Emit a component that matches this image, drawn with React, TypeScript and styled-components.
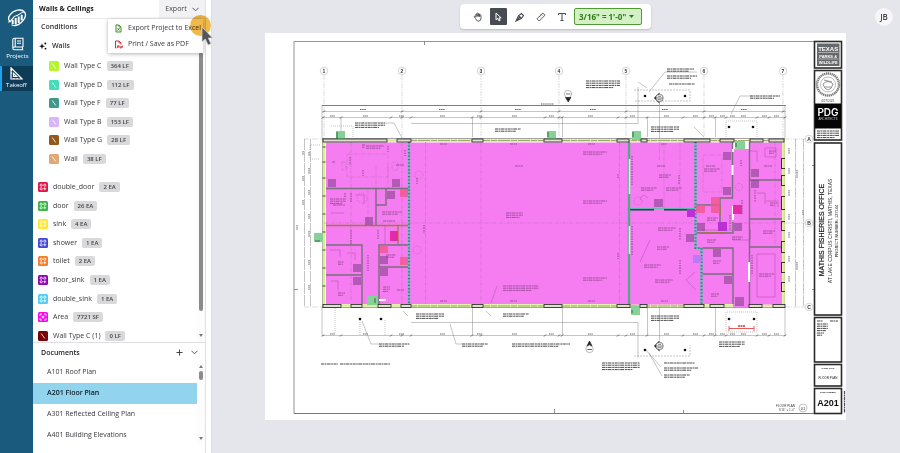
import React from "react";
import styled, { createGlobalStyle } from "styled-components";

const GlobalStyle = createGlobalStyle`
  * { box-sizing: border-box; }
  body { margin: 0; background: #e5e6eb; font-family: "Open Sans", "Noto Sans", sans-serif; }
  button, select { font: inherit; color: inherit; border: 0; margin: 0; padding: 0; background: none; cursor: pointer; }
  ul { list-style: none; margin: 0; padding: 0; }
  h1, h2, h3 { margin: 0; font-size: 7px; font-weight: 700; line-height: 10px; }
`;

const Shell = styled.div`
  display: flex;
  min-height: 100vh;
  font-size: 7px;
  line-height: 10px;
  color: #38383d;
`;

/* ---------- navigation rail ---------- */
const Rail = styled.nav`
  flex: none;
  width: 33px;
  background: #1a5a7d;
  color: #fff;
  display: flex;
  flex-direction: column;
`;
const LogoLink = styled.a`
  display: flex;
  justify-content: center;
  padding: 9px 0 8px;
`;
const RailLink = styled.a<{ $active?: boolean }>`
  display: flex;
  flex-direction: column;
  align-items: center;
  justify-content: flex-end;
  height: ${(p) => (p.$active ? 25 : 31)}px;
  padding: ${(p) => (p.$active ? "0 2px 1px 0" : "0 0 5px 2px")};
  border-left: ${(p) => (p.$active ? "2px solid #1ba4ee" : "0")};
  background: ${(p) => (p.$active ? "#0d3b58" : "transparent")};
  color: #fff;
  font-size: 6px;
  line-height: 10px;
  text-decoration: none;
`;

/* ---------- side panel ---------- */
const Side = styled.aside`
  flex: none;
  width: 179px;
  background: #fff;
  border-right: 1px solid #dcdde2;
  display: flex;
`;
const SideBody = styled.div`
  position: relative;
  width: 173px;
  border-right: 1px solid #e2e2e6;
  display: flex;
  flex-direction: column;
`;
const PanelHeader = styled.header`
  display: flex;
  justify-content: space-between;
  align-items: center;
  height: 19px;
  padding-left: 6px;
  border-bottom: 1px solid #ebebee;
  color: #16161a;
`;
const ExportButton = styled.button`
  display: flex;
  align-items: center;
  justify-content: center;
  gap: 5px;
  width: 46px;
  height: 18px;
  background: #f2f2f4;
  color: #44444a;
`;
const Menu = styled.div`
  position: absolute;
  top: 19px;
  right: 2px;
  width: 95px;
  padding: 1px 0;
  background: #fff;
  box-shadow: 0 1px 4px rgba(0, 0, 0, 0.3);
`;
const MenuItem = styled.button`
  display: flex;
  align-items: center;
  gap: 5px;
  width: 100%;
  height: 16px;
  padding-left: 6px;
  white-space: nowrap;
`;
const ClickHalo = styled.span`
  position: absolute;
  top: 15px;
  left: 157px;
  width: 21px;
  height: 21px;
  border-radius: 50%;
  background: #f0b94a;
  mix-blend-mode: multiply;
  pointer-events: none;
`;
const Pointer = styled.svg`
  position: absolute;
  top: 15px;
  left: 157px;
  pointer-events: none;
`;
const Scroller = styled.div<{ $height?: number }>`
  display: flex;
  height: ${(p) => (p.$height ? `${p.$height}px` : "auto")};
  overflow: hidden;
`;
const ScrollContent = styled.div`
  flex: 1;
`;
const ScrollTrack = styled.div<{ $top: number }>`
  flex: none;
  width: 8px;
  padding-top: ${(p) => p.$top}px;
  display: flex;
  flex-direction: column;
  align-items: center;
  background: #fcfcfc;
`;
const Thumb = styled.span<{ $size: number }>`
  flex: none;
  width: 4px;
  height: ${(p) => p.$size}px;
  border-radius: 2px;
  background: #8b8b8b;
`;
const Arrow = styled.span<{ $up?: boolean }>`
  margin: ${(p) => (p.$up ? "0 0 3px" : "auto 0 5px")};
  border: 2px solid transparent;
  border-${(p) => (p.$up ? "top" : "bottom")}: 0;
  border-${(p) => (p.$up ? "bottom" : "top")}: 3px solid #77777a;
`;
const SectionTitle = styled.h2`
  padding: 3px 0 0 8px;
  color: #333338;
  font-weight: 600;
`;
const GroupTitle = styled.h3`
  display: flex;
  align-items: center;
  gap: 5px;
  padding: 9px 0 6px 6px;
  color: #333338;
  font-weight: 600;
`;
const List = styled.ul<{ $height: number; $indent: number }>`
  display: grid;
  grid-auto-rows: 1fr;
  height: ${(p) => p.$height}px;
  margin-bottom: 10px;
  padding-left: ${(p) => p.$indent}px;
`;
const Row = styled.li`
  display: flex;
  align-items: center;
  gap: 5px;
  white-space: nowrap;
`;
const Badge = styled.span`
  padding: 0 4px;
  border-radius: 2px;
  background: #d9d9db;
  color: #444448;
  font-size: 6px;
  line-height: 10px;
  font-weight: 600;
`;
const DocsHeader = styled.div`
  display: flex;
  align-items: center;
  gap: 8px;
  height: 20px;
  padding: 0 7px 0 8px;
  border-top: 1px solid #dedee2;
  h2 { flex: 1; color: #222227; font-weight: 600; }
`;
const DocList = styled.ul`
  display: grid;
  grid-auto-rows: 1fr;
  height: 83px;
`;
const IconButton = styled.button`
  display: flex;
`;
const DocButton = styled.button<{ $active?: boolean }>`
  width: 100%;
  height: 100%;
  padding-left: 14px;
  text-align: left;
  color: ${(p) => (p.$active ? "#0d1a22" : "#38383d")};
  font-weight: ${(p) => (p.$active ? 600 : 400)};
  background: ${(p) => (p.$active ? "#92d3ee" : "transparent")};
`;

/* ---------- work area ---------- */
const Main = styled.main`
  flex: 1;
  min-width: 0;
  background: #e5e6eb;
`;
const TopBar = styled.div`
  display: grid;
  grid-template-columns: 1fr auto 1fr;
  align-items: center;
  height: 33px;
  padding: 0 7px 0 6px;
`;
const Toolbar = styled.div`
  grid-column: 2;
  display: flex;
  align-items: center;
  gap: 4px;
  height: 25px;
  padding: 0 9px;
  border-radius: 4px;
  background: #fff;
  box-shadow: 0 1px 2px rgba(0, 0, 0, 0.18);
`;
const Tool = styled.button<{ $active?: boolean }>`
  display: flex;
  align-items: center;
  justify-content: center;
  width: 17px;
  height: 17px;
  border-radius: 1px;
  background: ${(p) => (p.$active ? "#484b52" : "transparent")};
  color: ${(p) => (p.$active ? "#fff" : "#4a4a50")};
`;
const ScaleBox = styled.label`
  display: flex;
  align-items: center;
  width: 68px;
  height: 17px;
  padding: 0 7px 0 4px;
  border: 1px solid #4f9a31;
  border-radius: 2px;
  background: #d5f0c6;
  color: #2b7d12;
`;
const ScaleSelect = styled.select`
  flex: 1;
  min-width: 0;
  appearance: none;
  outline: 0;
  font-size: 8px;
  line-height: 12px;
  font-weight: 700;
`;
const Avatar = styled.button`
  justify-self: end;
  width: 18px;
  height: 18px;
  border-radius: 50%;
  background: #f6f6f7;
  color: #44444a;
  font-size: 8px;
  font-weight: 600;
`;
const SheetArea = styled.div`
  padding: 0 54px 33px 53px;
`;
const Sheet = styled.svg`
  display: block;
  width: 100%;
  height: auto;
  background: #fff;
`;

/* ---------- icons ---------- */
const Logo = () => (
  <svg width="20" height="18" viewBox="0 0 20 18" fill="none" stroke="#fff" strokeLinecap="round">
    <path d="M3 12.500C-1 8.500 4.500 2.500 10.500 1.200C17.500 0 20 4.500 17.500 9.500C15 14.500 9 18 5 16" strokeWidth="1.300" />
    <path d="M1.500 13C5 13 6 7 8.500 7C11 7 13.500 3.500 16.500 3" strokeWidth="1.200" />
    <path d="M5.700 11V15M8.700 9V15.500M11.700 7.500V14M14.700 5.700V11.500" strokeWidth="2" strokeLinecap="butt" />
  </svg>
);
const BookIcon = () => (
  <svg width="12" height="14" viewBox="0 0 12 14" fill="none" stroke="#fff" strokeWidth="1.100">
    <path d="M11 10V1.200H2.300Q.8 1.200 .8 2.800V11.200Q.8 12.800 2.500 12.800H11.300M11 10H2.500Q.8 10 .8 11.400M10.500 10V12.800M3.200 1.200V10M5 4H9M5 6.200H9" />
  </svg>
);
const SquareIcon = () => (
  <svg width="13" height="13" viewBox="0 0 13 13" fill="none" stroke="#fff" strokeWidth="1.200">
    <path d="M1 .8V12H12.200ZM3.500 6.500V9.500H6.700Z M1 3.500H2.200M1 6H2.200M4 12V10.900M7 12V10.900" />
  </svg>
);
const Chevron = () => (
  <svg width="7" height="5" viewBox="0 0 7 5" fill="none" stroke="#55555a" strokeWidth="1">
    <path d="M.5 .8L3.500 3.800L6.500 .8" />
  </svg>
);
const PlusIcon = () => (
  <svg width="7" height="7" viewBox="0 0 7 7" stroke="#44444a" strokeWidth="1">
    <path d="M3.500 .5V6.500M.5 3.500H6.500" />
  </svg>
);
const SparkIcon = () => (
  <svg width="8" height="8" viewBox="0 0 8 8" fill="#111">
    <path d="M3 1.300L3.800 3.500L6 4.300L3.800 5.100L3 7.300L2.200 5.100L0 4.300L2.200 3.500Z" />
    <circle cx="6.300" cy="1.500" r="1" />
    <circle cx="6.500" cy="6.700" r=".9" />
  </svg>
);
const FileIcon = ({ color, pdf }: { color: string; pdf?: boolean }) => (
  <svg width="9" height="9" viewBox="0 0 9 9" fill="none" stroke={color} strokeWidth="1">
    <path d={pdf ? "M1.500 8V1H5L7 3V4.500M1.500 8H2.500" : "M2 1H5L7 3V8H2Z"} />
    <path d={pdf ? "M3.500 7.800V5.800H5V7H3.500M6 8V5.800M6 8H7.200V6M8.200 8V6H9" : "M3.400 4L5.600 6.700M5.600 4L3.400 6.700"} strokeWidth=".9" />
    <path d="M5 1V3H7" strokeWidth=".8" />
  </svg>
);
const Swatch = ({ color, kind }: { color: string; kind: string }) => (
  <svg width="10" height="10" viewBox="0 0 10 10" fill="none" stroke="#fff">
    <rect width="10" height="10" rx="1.500" fill={color} stroke="none" />
    {kind === "line" && <path d="M3.200 2.500L6.800 7.500" strokeWidth=".8" />}
    {kind === "count" && (
      <g strokeWidth=".8">
        <circle cx="3.200" cy="3.200" r="1.100" />
        <circle cx="6.800" cy="3.200" r="1.100" />
        <circle cx="3.200" cy="6.800" r="1.100" />
        <path d="M5.300 6.800H8.200M6.800 5.300V8.200" />
      </g>
    )}
    {kind === "area" && <path d="M2 3.800V2H4M6 2H8V3.800M8 6.200V8H6M4 8H2V6.200M3.500 5H6.500M5 3.600V6.400" strokeWidth=".9" />}
  </svg>
);
const HandIcon = () => (
  <svg width="10" height="10" viewBox="0 0 10 10" fill="none" stroke="currentColor" strokeWidth=".9" strokeLinejoin="round">
    <path d="M2.600 6.400L1.300 5.200Q.7 4.300 1.700 4.300L2.800 5.200V2.400Q3.400 1.500 4 2.400V4.500V1.600Q4.700 .7 5.300 1.600V4.500V2Q6 1.100 6.600 2V4.700V3.100Q7.300 2.300 8 3.200V6.300Q7.800 9.200 5.300 9.200Q3.600 9.200 2.600 6.400Z" />
  </svg>
);
const ArrowIcon = () => (
  <svg width="9" height="10" viewBox="0 0 9 10" fill="none" stroke="currentColor" strokeWidth="1">
    <path d="M2 1V7.800L3.700 6.300L4.900 8.900L6.100 8.300L5 5.900H7.200Z" />
  </svg>
);
const PenIcon = () => (
  <svg width="10" height="10" viewBox="0 0 10 10" fill="none" stroke="currentColor" strokeWidth="1.100">
    <path d="M1 9L3.500 3.800L6.500 1.500L8.500 3.500L6.200 6.500ZM1 9L5 5M6.200 1.200L8.800 3.800" />
    <path d="M3.700 4L6 6.200" strokeWidth="1.600" />
  </svg>
);
const RulerIcon = () => (
  <svg width="10" height="10" viewBox="0 0 10 10" fill="none" stroke="currentColor" strokeWidth=".9">
    <path d="M6.800 1L9 3.200L3.200 9L1 6.800ZM5.200 2.600L6.200 3.600M3.500 4.300L4.500 5.300" />
  </svg>
);
const TextIcon = () => (
  <svg width="10" height="10" viewBox="0 0 10 10" fill="none" stroke="currentColor" strokeWidth="1">
    <path d="M1.500 3V1.500H8.500V3M5 1.500V8.500M3.500 8.500H6.500" />
  </svg>
);
const Caret = () => (
  <svg width="5" height="3" viewBox="0 0 5 3" fill="#2b7d12">
    <path d="M0 0H5L2.500 3Z" />
  </svg>
);

/* ---------- floor plan ---------- */
const Fill = ({ items, color, opacity = 1 }: { items: number[][]; color: string; opacity?: number }) => (
  <g fill={color} opacity={opacity}>
    {items.map(([x, y, w = 8, h = 8], i) => (
      <rect key={i} x={x} y={y} width={w} height={h} />
    ))}
  </g>
);

/* Small annotation blocks: x, y, width, number of lines */
const notes = [
  [355, 123, 30, 3], [586, 81, 34, 4], [667, 69, 27, 2], [667, 76, 30, 2], [669, 84, 26, 1],
  [750, 96, 30, 2], [651, 127, 28, 3], [495, 129, 26, 2], [416, 314, 28, 3], [379, 344, 31, 2],
  [462, 344, 26, 2], [503, 314, 26, 2], [512, 344, 58, 2], [602, 363, 38, 4], [664, 363, 31, 1],
  [664, 368, 34, 2], [664, 375, 26, 2], [651, 316, 28, 3], [719, 342, 26, 3], [321, 364, 17, 1],
  [340, 364, 50, 1],
];
const titleNotes = [[817, 131, 22, 4], [817, 321, 6, 1], [830, 321, 8, 1], [817, 324, 11, 4], [817, 333, 7, 2]];
const roomNotes = [
  [366, 146, 18, 2], [330, 199, 16, 3], [382, 212, 20, 2], [338, 262, 6, 2], [338, 293, 7, 2],
  [386, 255, 10, 2], [383, 287, 7, 3], [396, 165, 8, 1], [332, 162, 3, 1], [383, 221, 12, 1],
  [506, 213, 17, 3], [583, 152, 24, 2], [583, 201, 24, 2], [583, 278, 24, 2], [503, 286, 36, 3],
  [515, 166, 8, 1], [659, 175, 12, 2], [641, 188, 16, 2], [666, 188, 16, 2], [657, 166, 8, 1],
  [658, 228, 18, 2], [657, 247, 12, 2], [644, 265, 17, 2], [655, 280, 18, 2], [704, 169, 16, 2],
  [706, 166, 9, 1], [769, 151, 7, 2], [764, 166, 8, 1], [770, 203, 7, 2], [763, 231, 12, 2],
  [759, 274, 15, 2], [707, 218, 11, 2], [707, 240, 9, 2], [713, 261, 8, 2], [711, 294, 8, 2],
  [732, 237, 11, 2], [510, 144, 7, 1], [588, 144, 7, 1], [661, 144, 6, 1], [440, 144, 7, 1], [362, 145, 3, 2],
  [510, 301, 7, 1], [588, 301, 7, 1], [661, 301, 7, 1], [440, 301, 7, 1], [333, 205, 12, 1], [397, 290, 7, 1],
];
const Notes = ({ items, color }: { items: number[][]; color: string }) => (
  <g stroke={color} strokeWidth="1" strokeDasharray="3 .5 1.500 .5 4 .7 2 .5">
    {items.flatMap(([x, y, w, n], i) =>
      Array.from({ length: n }, (_, k) => (
        <path key={`${i}-${k}`} d={`M${x} ${y + k * 2.2}h${k === n - 1 && n > 1 ? w * 0.8 : w}`} />
      ))
    )}
  </g>
);

const Bubble = ({ x, y, label }: { x: number; y: number; label: string }) => (
  <g>
    <circle cx={x} cy={y} r="3.800" fill="#fff" stroke="#aaa" strokeWidth=".5" />
    <text x={x} y={y + 1.7} textAnchor="middle" fontSize="5" fontWeight="700" fill="#333">{label}</text>
  </g>
);
const Marker = ({ x, y }: { x: number; y: number }) => (
  <g>
    <path d={`M${x - 5.5} ${y}L${x} ${y - 5.5}V${y + 5.5}Z`} fill="#111" />
    <circle cx={x} cy={y} r="3.700" fill="#fff" stroke="#333" strokeWidth=".6" />
    <path d={`M${x - 3.5} ${y}h7M${x - 1.5} ${y - 1.7}h3M${x - 2} ${y + 1.7}h4`} stroke="#444" strokeWidth=".7" />
  </g>
);

const columns = [324, 402, 481, 559, 626, 704, 783];
const dims = [323, 341, 391, 402, 411, 472, 481, 545, 559, 562, 618, 626, 647, 683, 704, 715, 726, 757, 769, 785];
const topBlocks = [[323, 64], [397, 14], [472, 11], [544, 18], [617, 12], [641, 6], [684, 26], [720, 14], [750, 13], [769, 15]];
const bottomBlocks = [[323, 18], [351, 11], [378, 13], [401, 10], [472, 11], [544, 18], [617, 13], [640, 7], [684, 20], [710, 14], [749, 13], [773, 12]];

const FloorPlan = () => (
  <Sheet viewBox="265 33 581 387" role="img" aria-label="A201 Floor Plan" fontFamily="'Liberation Sans', Arial, sans-serif">
    <g fill="none" stroke="#777" strokeWidth=".8">
      <path d="M842 41.500H294V413.500H842" />
      <path d="M294 413.500H813" stroke="#777" strokeWidth="1.200" />
      <path d="M424.500 41V45M554.500 409V413M683.500 410V413M812 165.500H815M812 289.500H815M294 289.500H298" />
    </g>

    <g fill="none" stroke="#bbb" strokeWidth=".5" strokeDasharray="5 1 1 1">
      {columns.map((x) => <path key={x} d={`M${x} 75V138`} />)}
      <path d="M304 139H322M785 139H805M304 307H322M785 307H805M785 223H805" />
    </g>
    <g fill="none" stroke="#8a8a8a" strokeWidth=".5">
      <path d="M322 105.500H786" stroke="#444" strokeWidth=".7" />
      <path d="M322 111.500H786M322 117.500H786M322 335.500H786" />
      <path d="M411 123.500H638V87M411 322.500H638V358M322 105V138M785 105V138M322 307V336M785 307V336" />
      <path d="M304.500 139V307M310.500 139V307M803.500 139V307M795.500 139V307" strokeDasharray="11 1" />
      <path d="M659.500 103V160M659.500 290V340M472.500 117V137M562.500 117V137M647.500 117V137M715.500 117V137M472.500 307V335M562.500 307V335M647.500 307V335M715.500 307V335M341 117V131" />
      <path d="M385 123H394L402 138M694 127L704 137M647 88L638 82M697 72H665L649 92M752 96H740L731 114M403 311L408 316M362 321L371 344H379M450 324L456 344H462M486 311L491 316M645 349L661 367M649 353L662 376" />
      <path d="M320 145H310V159H320M331 126H353V138M335 308V334M360 320V336M385 320V336M726 312V332H757V312H726M726 137V121H757V137" strokeDasharray="1 1" />
      <path d="M634 90H690V101H634M634 356H690V345" strokeDasharray="2 1" />
    </g>
    <g stroke="#555" strokeWidth=".9">
      {dims.map((x) => <path key={x} d={`M${x} 117.500m-1 1l2 -2M${x} 335.500m-1 1l2 -2`} />)}
      {columns.map((x) => <path key={x} d={`M${x - 1} 112.500l2 -2`} />)}
    </g>
    <g stroke="#666" strokeWidth="1" strokeDasharray="1.500 .6">
      {[330, 363, 399, 440, 477, 512, 549, 588, 630, 664, 693, 709, 720, 730, 741, 762, 774].map((x) => (
        <path key={x} d={`M${x} 116h5M${x} 334h5`} />
      ))}
      {[360, 439, 515, 590, 662, 741].map((x) => <path key={x} d={`M${x} 109.500h6`} />)}
      <path d="M541 104h13M303 151v4M303 176v5M303 200v5M309 152v4M309 168v6M309 190v5M309 214v5M309 231v6M309 260v5M309 285v5M297 225v5M789 148v6M789 168v6M789 190v6M789 214v6M789 232v6M789 256v6M789 276v6M797 170v8M797 262v8M803 210v5" />
    </g>
    {columns.map((x, i) => <Bubble key={x} x={x} y={71} label={String(i + 1)} />)}
    {["A", "B", "C"].map((l, i) => <Bubble key={l} x={809} y={139 + i * 84} label={l} />)}

    {/* Exterior walls */}
    <rect x="322.500" y="138.500" width="462" height="169" fill="#fff" stroke="#666" strokeWidth=".6" />
    <g fill="none" stroke="#d9ee92" strokeWidth="2.600">
      <path d="M324 140.500H735M748 140.500H783.500V305.500H749M733 305.500H324V140.500" />
    </g>
    <path d="M411 140.500H783M411 306H700" fill="none" stroke="#7e9445" strokeWidth=".7" strokeDasharray="6 1 12 1" />

    {/* Takeoff areas */}
    <Fill color="#f67df1" items={[[326, 142.500, 83, 161.500], [410, 142.500, 219, 161.500], [630, 142.500, 65, 162], [695, 142.500, 38, 161.500], [733, 149, 17, 158], [749, 142.500, 33, 162]]} />
    <g fill="none" stroke="#c264bd" strokeWidth=".5" strokeDasharray="4 1 1 1">
      <path d="M324 223H785M481 142V304M425.500 142V304M619.500 142V304M659.500 142V160M351 142V300M368 190V222M402 142V304M680 142V208M664 143V208M775 142V248M703 155H722V192H703ZM347 154H388V177H347ZM342 162H346V170H342ZM392 162H398V170H392ZM376 166V188M388 166V188" />
    </g>
    <g fill="none" stroke="#b758b2" strokeWidth=".6">
      <path d="M757 254H775V297H757ZM750 151H757V162M765 148H776V157H765ZM757 193H765V204M766 201H778V207M330 250H340V257M347 253H355V260M331 281H338V290M355 195H364V204M331 213H344M385 225V245M650 240L640 262M695 272L686 280L696 290M733 240H749M702 230H733M497 286L491 303M640 200Q642 192 648 198" />
      <circle cx="739" cy="187" r="3.500" strokeDasharray="1 1" />
      <circle cx="419" cy="175" r="4" strokeDasharray="1 1" />
      <circle cx="417" cy="250" r="4" strokeDasharray="1 1" />
      <circle cx="638" cy="201" r="4" strokeDasharray="1 1" />
      <circle cx="362" cy="198" r="5" strokeDasharray="1 1" />
    </g>
    <Notes items={roomNotes} color="#a24e9f" />
    <g stroke="#843f82" strokeWidth=".9" strokeDasharray="1.500 1">
      <path d="M350 157v8M351 193v10M351 230v14M368 255v16M405 150v6M408 190v5M417 178v6M424 225v8M632 156v30M632 226v30M618 174v5M618 253v6M679 175v10M680 228v12M680 260v15M696 180v8M741 160v6M755 190v12M742 200v14M750 230v10M388 146v6M363 170v6M345 193v4M378 230v10M730 215v14M752 255v20" />
    </g>

    {/* Interior walls */}
    <g fill="none" stroke="#75707c" strokeWidth="1.400">
      <path d="M326 188.500H408M376 189V225M376 205H386V189M326 245H362V304M326 275H362M379 304V245H408M379 267H408" />
      <path d="M732.500 142V198H720V222M695 205H720M695 233H733V222M702 248H733V304M702 274H733M749.500 142V304M749 180H782M749 219H782M749 247H782" />
    </g>
    <path d="M326 225.500H408M398 226V244M720 205V216M702 233H725" fill="none" stroke="#a07a42" strokeWidth="1.300" />
    <path d="M629 209.500H654M664 209.500H695" stroke="#223b44" strokeWidth="2" />
    <path d="M629 208.600H695" stroke="#58bfae" strokeWidth="1" />
    <path d="M629 142V304" stroke="#53a985" strokeWidth="2.400" />
    <path d="M629.500 159V194M629.500 226V254" stroke="#d8ebe6" strokeWidth="1.600" />
    <g fill="none">
      <path d="M409 142V305M695.500 142V248H701.500V305" stroke="#55c9b5" strokeWidth="2.200" />
      <path d="M409 142V305M695.500 142V248H701.500V305" stroke="#40506a" strokeWidth="2.200" strokeDasharray="1.200 2.200" opacity=".7" />
    </g>
    <path d="M732.500 165V175M749 262V282M386 300H379M733 149V152M733 206V220" stroke="#fff" strokeWidth="2" />

    {/* Counted items */}
    <Fill color="#7b3f86" opacity={0.55} items={[[328, 179], [392, 179], [387, 191], [365, 217], [353, 264], [353, 277], [380, 256], [380, 268], [723, 152], [723, 187], [751, 169], [751, 180], [654, 199, 9], [686, 234], [713, 249], [724, 276], [697, 223], [734, 223], [735, 297, 9, 9]]} />
    <Fill color="#f2578e" opacity={0.8} items={[[400, 189], [400, 257], [380, 245], [696, 205, 9], [711, 205, 9], [711, 197, 9]]} />
    <Fill color="#e62aa5" items={[[390, 231, 8, 10], [733, 205, 9, 9]]} />
    <Fill color="#b930d6" items={[[687, 209], [718, 222, 9, 9]]} />
    <Fill color="#b77cf0" items={[[693, 255]]} />
    <Fill color="#86d296" items={[[336, 131, 9, 9], [314, 233, 9, 9], [367, 296, 10, 9], [547, 131, 9, 9], [632, 131, 9, 9], [631, 306, 9, 9], [735, 141, 10, 9]]} />
    <path d="M337 132V139M548 132V137M633 132V137M315 241H320M375 298V303M632 310V313M736 143V147" stroke="#2f6b3c" strokeWidth="1" />

    {/* Piers */}
    <g fill="#dfe0cd" stroke="#222" strokeWidth=".8">
      {topBlocks.map(([x, w]) => <rect key={x} x={x} y="139" width={w} height="3" />)}
      {bottomBlocks.map(([x, w]) => <rect key={x} x={x} y="304.500" width={w} height="3" />)}
      {[147, 162, 178, 196, 214, 232, 250, 268, 286].map((y) => <path key={y} d={`M322.500 ${y}h3`} />)}
    </g>
    <g fill="#333">
      {[[158, 9], [175, 9], [196, 12], [221, 8], [241, 10], [262, 9], [282, 8]].map(([y, h]) => (
        <path key={y} d={`M781 ${y}h4v1h-3v${h}h3v1h-4z`} />
      ))}
    </g>

    {/* Posts and section markers */}
    <g fill="#111">
      {[[645, 96], [685, 96], [729, 127], [753, 127], [360, 319], [381, 319], [729, 319], [754, 319], [645, 350], [685, 350]].map(([x, y]) => (
        <circle key={`${x}-${y}`} cx={x} cy={y} r="1.300" />
      ))}
    </g>
    <Marker x={659.5} y={98} />
    <Marker x={659.5} y={346} />
    <circle cx="568" cy="94" r="3.700" fill="#fff" stroke="#777" strokeWidth=".5" />
    <path d="M565.500 97.500H571L568.200 102ZM566 94H570.500" stroke="#222" fill="#222" strokeWidth=".6" />
    <circle cx="589.500" cy="349" r="3.700" fill="#fff" stroke="#777" strokeWidth=".5" />
    <path d="M587 346L589.500 341L592 346L589.500 344.500ZM587.500 349.500H592" stroke="#222" fill="#222" strokeWidth=".7" />
    <path d="M729 328.500H754M729 326V331M754 326V331" stroke="#e24848" strokeWidth=".9" />
    <path d="M738 326H745" stroke="#d33" strokeWidth="1.400" strokeDasharray="2 .5" />
    <Notes items={notes} color="#4a4a4a" />
    <text x="795" y="407" textAnchor="end" fontSize="3" fill="#333">FLOOR PLAN</text>
    <text x="795" y="411" textAnchor="end" fontSize="3" fill="#555">3/16&quot; = 1'-0&quot;</text>
    <circle cx="803" cy="408" r="4" fill="none" stroke="#888" strokeWidth=".5" />
    <text x="803" y="409.500" textAnchor="middle" fontSize="4" fill="#333">01</text>

    {/* Title block */}
    <g fill="#fff" stroke="#2a2a2a" strokeWidth="1.600">
      <rect x="814.500" y="41.500" width="27" height="26.500" />
      <rect x="814.500" y="70.500" width="27" height="69.500" />
      <rect x="814.500" y="143" width="27" height="172" />
      <rect x="814.500" y="317.500" width="27" height="44.500" />
      <rect x="814.500" y="364.500" width="27" height="21.500" />
      <rect x="814.500" y="388.500" width="27" height="25" />
    </g>
    <rect x="817" y="43.500" width="22.500" height="22.500" fill="#66696c" />
    <path d="M818 52.500H838.500M818 59H838.500" stroke="#ddd" strokeWidth=".6" />
    <g fill="#fff" textAnchor="middle" fontWeight="700">
      <text x="828.200" y="51" fontSize="6">TEXAS</text>
      <text x="828.200" y="57.600" fontSize="4">PARKS &amp;</text>
      <text x="828.200" y="64" fontSize="4">WILDLIFE</text>
    </g>
    <g fill="none" stroke="#777">
      <circle cx="828" cy="84.500" r="11" strokeWidth="2.400" strokeDasharray="1.300 .6" />
      <circle cx="828" cy="84.500" r="7.500" strokeWidth=".5" />
      <path d="M823 84Q828 79 833 84Q832 89 828 90Q824 89 823 84M824 80L832 82M825 87H831" strokeWidth=".8" />
    </g>
    <text x="828" y="101.500" textAnchor="middle" fontSize="3" fill="#444">4/27/2021</text>
    <rect x="815" y="103.500" width="26" height="25" fill="#050505" />
    <text x="828" y="115.500" textAnchor="middle" fontSize="10" fill="#fff" fontFamily="Inter, sans-serif" fontWeight="600">PDG</text>
    <text x="828" y="119.500" textAnchor="middle" fontSize="3" fill="#ccc">ARCHITECTS</text>
    <Notes items={titleNotes} color="#444" />
    <g textAnchor="middle" fill="#1a1a1a">
      <text transform="translate(824 230) rotate(-90)" fontSize="7" stroke="#1a1a1a" strokeWidth=".2">MATHIS FISHERIES OFFICE</text>
      <text transform="translate(832 231) rotate(-90)" fontSize="5">AT LAKE CORPUS CHRISTI, MATHIS, TEXAS</text>
      <text transform="translate(838 231) rotate(-90)" fontSize="4">PROJECT NUMBER: 127144</text>
      <text x="828" y="369" fontSize="2" fontWeight="700">SHEET TITLE</text>
      <text x="828" y="378.500" fontSize="3">FLOOR PLAN</text>
      <text x="828" y="392.500" fontSize="2" fontWeight="700">SHEET NUMBER</text>
      <text x="828" y="405.500" fontSize="9" fontWeight="700" fill="#111">A201</text>
    </g>
    <path d="M844.500 391V413" stroke="#555" strokeWidth="1.300" strokeDasharray="3 .5 2 .5" />
  </Sheet>
);

/* ---------- data ---------- */
const walls = [
  ["Wall Type C", "364 LF", "#b5f52c"],
  ["Wall Type D", "112 LF", "#46dcb8"],
  ["Wall Type F", "77 LF", "#41978a"],
  ["Wall Type B", "153 LF", "#d9b3fc"],
  ["Wall Type G", "28 LF", "#93591b"],
  ["Wall", "38 LF", "#dfa876"],
];
const items = [
  ["double_door", "2 EA", "#e0174a", "count"],
  ["door", "26 EA", "#3bb44b", "count"],
  ["sink", "4 EA", "#ffe62f", "count"],
  ["shower", "1 EA", "#4549d5", "count"],
  ["toilet", "2 EA", "#f27d2c", "count"],
  ["floor_sink", "1 EA", "#8d08b0", "count"],
  ["double_sink", "1 EA", "#54cdf5", "count"],
  ["Area", "7721 SF", "#f50be9", "area"],
  ["Wall Type C (1)", "0 LF", "#780505", "line"],
];
const documents = ["A101 Roof Plan", "A201 Floor Plan", "A301 Reflected Ceiling Plan", "A401 Building Elevations"];

export default function App() {
  return (
    <>
      <GlobalStyle />
      <Shell>
        <Rail aria-label="Main">
          <LogoLink href="#home" aria-label="Home"><Logo /></LogoLink>
          <RailLink href="#projects"><BookIcon />Projects</RailLink>
          <RailLink href="#takeoff" $active aria-current="page"><SquareIcon />Takeoff</RailLink>
        </Rail>
        <Side>
          <SideBody>
            <PanelHeader>
              <h1>Walls &amp; Ceilings</h1>
              <ExportButton type="button" aria-haspopup="menu" aria-expanded>Export <Chevron /></ExportButton>
            </PanelHeader>
            <Scroller $height={323}>
              <ScrollContent>
                <SectionTitle>Conditions</SectionTitle>
                <GroupTitle><SparkIcon />Walls</GroupTitle>
                <List $height={111} $indent={16}>
                  {walls.map(([name, amount, color]) => (
                    <Row key={name}><Swatch color={color} kind="line" />{name}<Badge>{amount}</Badge></Row>
                  ))}
                </List>
                <List $height={167} $indent={5}>
                  {items.map(([name, amount, color, kind]) => (
                    <Row key={name}><Swatch color={color} kind={kind} />{name}<Badge>{amount}</Badge></Row>
                  ))}
                </List>
              </ScrollContent>
              <ScrollTrack $top={33}><Thumb $size={259} /><Arrow /></ScrollTrack>
            </Scroller>
            <DocsHeader>
              <h2>Documents</h2>
              <IconButton type="button" aria-label="Add document"><PlusIcon /></IconButton>
              <IconButton type="button" aria-label="Collapse documents"><Chevron /></IconButton>
            </DocsHeader>
            <Scroller>
              <ScrollContent>
                <DocList>
                  {documents.map((name, i) => (
                    <li key={name}><DocButton type="button" $active={i === 1}>{name}</DocButton></li>
                  ))}
                </DocList>
              </ScrollContent>
              <ScrollTrack $top={3}><Arrow $up /><Thumb $size={9} /><Arrow /></ScrollTrack>
            </Scroller>
            <Menu role="menu">
              <MenuItem type="button" role="menuitem"><FileIcon color="#3c8f22" />Export Project to Excel</MenuItem>
              <MenuItem type="button" role="menuitem"><FileIcon color="#d32f35" pdf />Print / Save as PDF</MenuItem>
            </Menu>
            <ClickHalo />
            <Pointer width="24" height="32" viewBox="0 0 24 32">
              <path d="M12 12V27L15.300 24L18 30L21 28.700L18.300 23H22.500Z" fill="#55565a" stroke="#d9d9d9" strokeWidth=".7" />
            </Pointer>
          </SideBody>
        </Side>
        <Main>
          <TopBar>
            <Toolbar role="toolbar" aria-label="Drawing tools">
              <Tool type="button" aria-label="Pan"><HandIcon /></Tool>
              <Tool type="button" aria-label="Select" $active><ArrowIcon /></Tool>
              <Tool type="button" aria-label="Draw"><PenIcon /></Tool>
              <Tool type="button" aria-label="Measure"><RulerIcon /></Tool>
              <Tool type="button" aria-label="Text"><TextIcon /></Tool>
              <ScaleBox>
                <ScaleSelect aria-label="Scale" defaultValue="a">
                  <option value="a">3/16" = 1'-0"</option>
                </ScaleSelect>
                <Caret />
              </ScaleBox>
            </Toolbar>
            <Avatar type="button" aria-label="Account JB">JB</Avatar>
          </TopBar>
          <SheetArea><FloorPlan /></SheetArea>
        </Main>
      </Shell>
    </>
  );
}
